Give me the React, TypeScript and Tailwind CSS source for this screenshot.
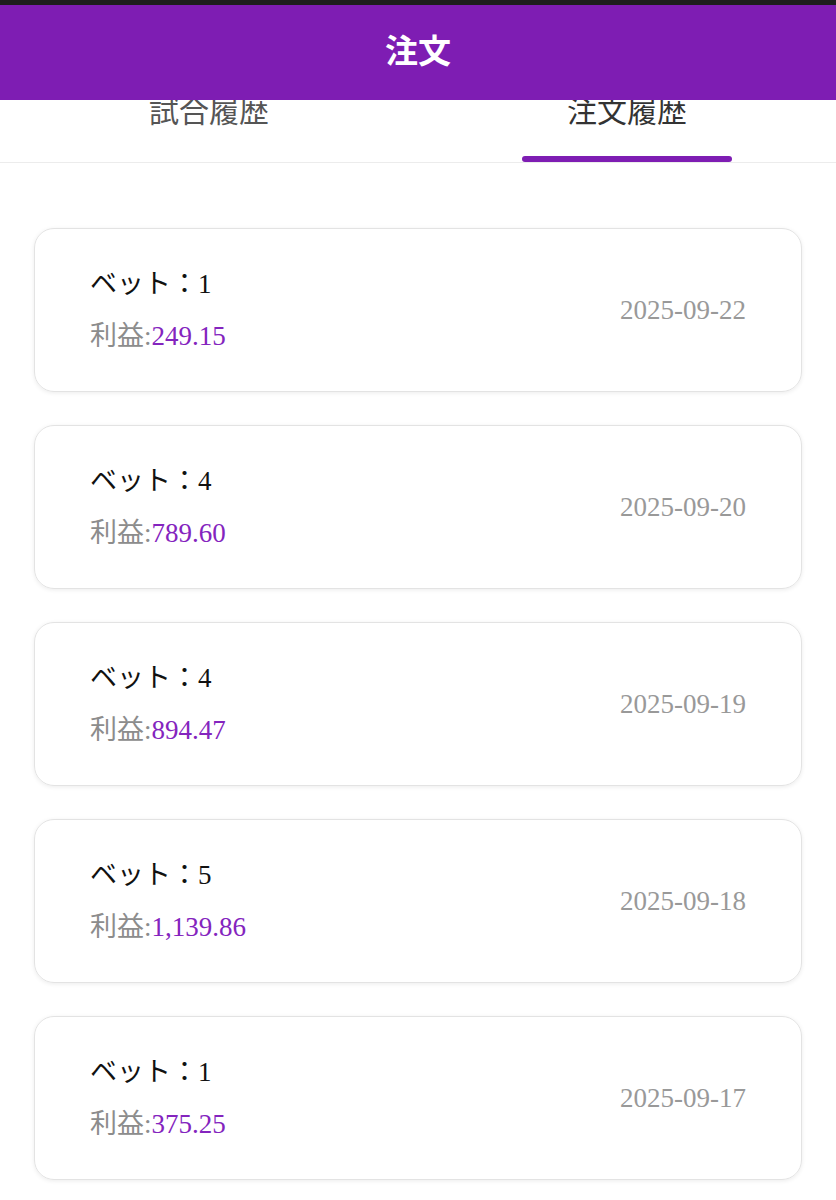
import React from "react";

const orders = [
  { bet: 1, profit: "249.15", date: "2025-09-22" },
  { bet: 4, profit: "789.60", date: "2025-09-20" },
  { bet: 4, profit: "894.47", date: "2025-09-19" },
  { bet: 5, profit: "1,139.86", date: "2025-09-18" },
  { bet: 1, profit: "375.25", date: "2025-09-17" },
];

const font = "font-['Liberation_Serif','Noto_Sans_CJK_JP',serif]";

export default function App() {
  return (
    <div className={`w-[836px] h-[1200px] overflow-hidden bg-white ${font}`}>
      <div className="h-[5px] bg-[#1e1e1e]" />
      <div className="relative">
        <div className="absolute top-0 left-0 right-0 z-10 h-[95px] bg-[#7e1db3] flex items-center justify-center">
          <span className="text-white text-[33px] font-bold leading-none">注文</span>
        </div>
        <div className="flex border-b border-[#ececec] pt-[80px]">
          <div className="flex-1 flex flex-col items-center">
            <div className="text-[30px] leading-[54px] text-[#555]">試合履歴</div>
            <div className="h-[6px] w-[210px] mt-[17px]" />
          </div>
          <div className="flex-1 flex flex-col items-center">
            <div className="text-[30px] leading-[54px] text-[#333]">注文履歴</div>
            <div className="h-[6px] w-[210px] mt-[17px] rounded-full bg-[#7e1db3]" />
          </div>
        </div>
      </div>
      <div className="flex flex-col gap-[33px] px-[34px] pt-[65px]">
        {orders.map((o, i) => (
          <div
            key={i}
            className="flex items-center justify-between rounded-[20px] border border-[#e3e3e3] shadow-[0_1px_4px_rgba(0,0,0,0.08)] pl-[55px] pr-[55px] py-[37px]"
          >
            <div className="flex flex-col gap-[16px]">
              <div className="text-[27px] leading-[36px] text-[#111]">ベット：{o.bet}</div>
              <div className="text-[27px] leading-[36px] text-[#8c8c8c]">
                利益:<span className="text-[#8424be]">{o.profit}</span>
              </div>
            </div>
            <div className="text-[27px] leading-[36px] text-[#999]">{o.date}</div>
          </div>
        ))}
      </div>
    </div>
  );
}
